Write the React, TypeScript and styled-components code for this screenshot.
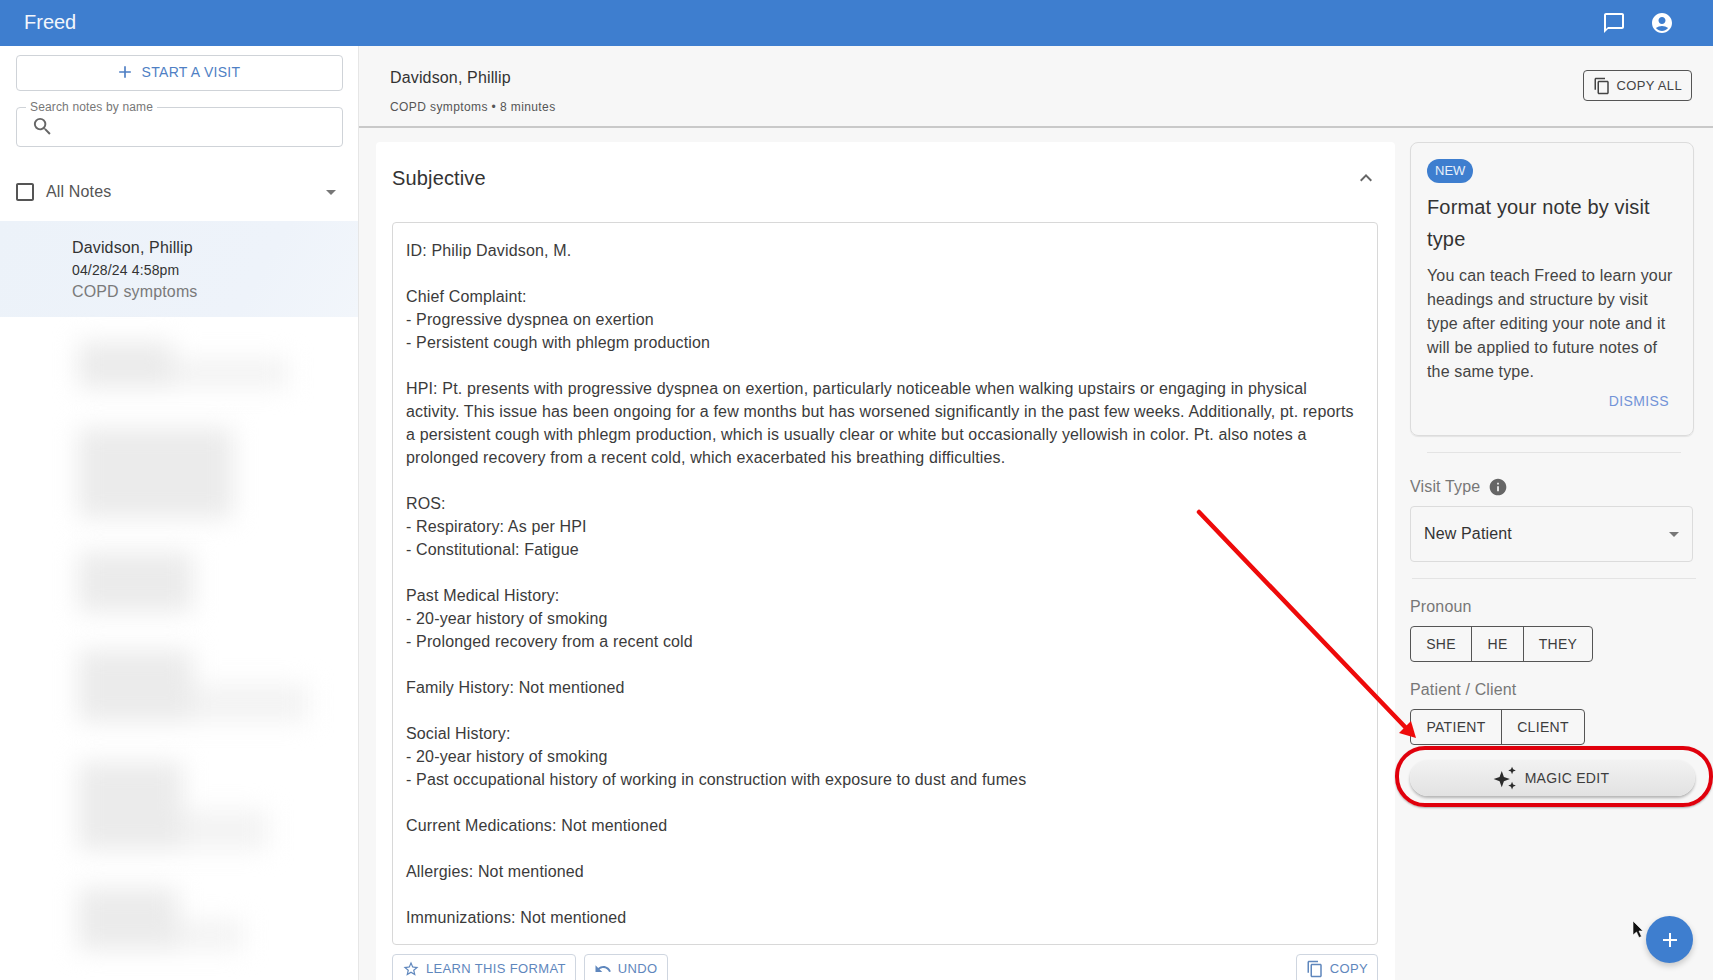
import styled, { createGlobalStyle } from 'styled-components'
import {
  MdAccountCircle,
  MdAdd,
  MdArrowDropDown,
  MdCheckBoxOutlineBlank,
  MdChatBubbleOutline,
  MdContentCopy,
  MdExpandLess,
  MdInfo,
  MdSearch,
  MdStarBorder,
  MdUndo
} from 'react-icons/md'

const GlobalStyle = createGlobalStyle`
  html, body {
    margin: 0;
    padding: 0;
    height: 100%;
    overflow: hidden;
    background: #f7f7f7;
    font-family: "Liberation Sans", Arial, sans-serif;
    letter-spacing: 0.15px;
  }
  * {
    box-sizing: border-box;
  }
`

const Page = styled.div`
  position: relative;
  width: 1713px;
  height: 980px;
  overflow: hidden;
  display: flex;
  flex-direction: column;
`

const AppBar = styled.header`
  height: 46px;
  flex-shrink: 0;
  background: #3e7ecf;
  color: #fff;
  display: flex;
  align-items: center;
  justify-content: space-between;
  padding: 0 39px 0 24px;
`

const Brand = styled.div`
  font-size: 20px;
  letter-spacing: 0;
  color: #f2f6fc;
  padding-bottom: 2px;
`

const AppBarIcons = styled.div`
  display: flex;
  align-items: center;
  gap: 24px;
`

const Body = styled.div`
  flex: 1;
  min-height: 0;
  display: flex;
`

const Sidebar = styled.aside`
  width: 359px;
  flex-shrink: 0;
  background: #fff;
  border-right: 1px solid #e6e6e6;
  padding-top: 9px;
  overflow: hidden;
`

const StartButton = styled.button`
  display: flex;
  align-items: center;
  justify-content: center;
  gap: 7px;
  width: 327px;
  height: 36px;
  margin: 0 0 0 16px;
  padding: 0 4px 2px 0;
  background: #fff;
  border: 1px solid #cfd3d8;
  border-radius: 4px;
  color: #4f7fc4;
  font: 14px "Liberation Sans", Arial, sans-serif;
  letter-spacing: 0.3px;
`

const SearchField = styled.div`
  position: relative;
  width: 327px;
  height: 40px;
  margin: 16px 0 0 16px;
  border: 1px solid #cfd3d8;
  border-radius: 4px;
  display: flex;
  align-items: center;
  padding: 0 0 2px 14px;
  color: #666;
`

const FloatingLabel = styled.span`
  position: absolute;
  top: -8px;
  left: 9px;
  padding: 0 4px;
  background: #fff;
  color: #777;
  font-size: 12px;
  line-height: 14px;
`

const FilterRow = styled.div`
  display: flex;
  align-items: center;
  height: 40px;
  margin-top: 25px;
  padding: 0 15px 0 13px;
  color: #555;
  font-size: 16px;
`

const FilterLabel = styled.span`
  flex: 1;
  margin-left: 9px;
`

const SelectedNote = styled.div`
  height: 96px;
  margin-top: 9px;
  padding: 16px 0 0 72px;
  background: linear-gradient(120deg, #ecf2f9 0%, #eef3fa 70%, #f2f6fb 100%);
`

const NoteName = styled.div`
  font-size: 16px;
  line-height: 22px;
  color: #333;
`

const NoteDate = styled.div`
  font-size: 14px;
  line-height: 22px;
  color: #333;
`

const NoteTopic = styled.div`
  font-size: 16px;
  line-height: 22px;
  color: #7a7a7a;
`

const BlurList = styled.div`
  padding-left: 78px;
`

const BlurRow = styled.div<{ $top: number }>`
  display: flex;
  align-items: flex-end;
  margin-top: ${p => p.$top}px;
  filter: blur(12px);
`

const BlurHead = styled.div<{ $w: number; $h: number }>`
  width: ${p => p.$w}px;
  height: ${p => p.$h}px;
  background: #ebebeb;
`

const BlurTail = styled.div<{ $w: number; $h: number }>`
  width: ${p => p.$w}px;
  height: ${p => p.$h}px;
  background: #f3f3f3;
`

const Main = styled.main`
  flex: 1;
  min-width: 0;
  display: flex;
  flex-direction: column;
  background: #f7f7f7;
`

const TopBar = styled.div`
  height: 82px;
  flex-shrink: 0;
  display: flex;
  align-items: flex-start;
  justify-content: space-between;
  padding: 22px 21px 0 31px;
  border-bottom: 2px solid #c9c9c9;
`

const VisitName = styled.div`
  font-size: 16px;
  line-height: 19px;
  color: #333;
`

const VisitMeta = styled.div`
  margin-top: 12px;
  font-size: 12px;
  line-height: 16px;
  letter-spacing: 0.4px;
  color: #555;
`

const OutlineButton = styled.button<{ $tone?: 'dark' | 'blue'; $top?: number }>`
  display: inline-flex;
  align-items: center;
  gap: 6px;
  height: 31px;
  margin-top: ${p => p.$top ?? 0}px;
  padding: 0 9px ${p => (p.$tone === 'blue' ? 2 : 0)}px;
  background: ${p => (p.$tone === 'blue' ? '#fff' : 'transparent')};
  border: 1px solid ${p => (p.$tone === 'blue' ? '#cfd6e0' : '#555')};
  border-radius: 4px;
  color: ${p => (p.$tone === 'blue' ? '#5f87bd' : '#444')};
  font: 13px "Liberation Sans", Arial, sans-serif;
  letter-spacing: 0.35px;
  white-space: nowrap;
`

const Content = styled.div`
  flex: 1;
  min-height: 0;
  display: flex;
  align-items: flex-start;
  gap: 15px;
  padding: 14px 0 0 17px;
  overflow: hidden;
`

const NoteCard = styled.section`
  width: 1019px;
  height: 900px;
  flex-shrink: 0;
  background: #fff;
  border-radius: 4px;
  padding: 0 17px 0 16px;
`

const CardHeader = styled.div`
  height: 80px;
  display: flex;
  align-items: center;
  justify-content: space-between;
  padding-bottom: 8px;
  color: #666;
`

const CardTitle = styled.h2`
  margin: 0;
  font-size: 20px;
  font-weight: 400;
  color: #333;
`

const NoteBox = styled.div`
  height: 723px;
  padding: 16px 13px 0;
  border: 1px solid #d8d8d8;
  border-radius: 4px;
  font-size: 16px;
  line-height: 23px;
  color: #3b3b3b;
  white-space: pre-wrap;
  overflow: hidden;
`

const NoteActions = styled.div`
  display: flex;
  align-items: center;
  gap: 8px;
  margin-top: 9px;
`

const Spacer = styled.div`
  flex: 1;
`

const SidePanel = styled.aside`
  width: 285px;
  flex-shrink: 0;
`

const TipCard = styled.div`
  width: 284px;
  height: 294px;
  padding: 16px 16px 0;
  border: 1px solid #dcdcdc;
  border-radius: 8px;
  box-shadow: 0 1px 1px rgba(0, 0, 0, 0.08);
`

const NewPill = styled.span`
  display: inline-block;
  height: 24px;
  padding: 0 8px;
  background: #3e7ecf;
  border-radius: 12px;
  color: #e8f0fa;
  font-size: 13px;
  letter-spacing: 0;
  line-height: 24px;
`

const TipTitle = styled.div`
  margin-top: 8px;
  font-size: 20px;
  line-height: 32px;
  color: #333;
`

const TipText = styled.div`
  margin-top: 9px;
  font-size: 16px;
  line-height: 24px;
  color: #444;
`

const Dismiss = styled.div`
  margin-top: 7px;
  padding-right: 8px;
  text-align: right;
  font-size: 14px;
  line-height: 20px;
  letter-spacing: 0.4px;
  color: #7394d8;
`

const Divider = styled.hr<{ $left: number; $right: number; $top: number }>`
  margin: ${p => p.$top}px ${p => p.$right}px 0 ${p => p.$left}px;
  border: 0;
  border-top: 1px solid #e4e4e4;
`

const FieldLabel = styled.div<{ $top: number }>`
  display: flex;
  align-items: center;
  gap: 8px;
  margin-top: ${p => p.$top}px;
  font-size: 16px;
  line-height: 20px;
  color: #777;
`

const SelectBox = styled.div`
  display: flex;
  align-items: center;
  justify-content: space-between;
  width: 283px;
  height: 56px;
  margin-top: 9px;
  padding: 0 6px 0 13px;
  border: 1px solid #dcdcdc;
  border-radius: 4px;
  font-size: 16px;
  color: #333;
`

const ToggleGroup = styled.div<{ $top: number }>`
  display: inline-flex;
  height: 36px;
  margin-top: ${p => p.$top}px;
  border: 1px solid #555;
  border-radius: 4px;
`

const ToggleItem = styled.div<{ $w: number }>`
  display: flex;
  align-items: center;
  justify-content: center;
  width: ${p => p.$w}px;
  font-size: 14px;
  letter-spacing: 0.3px;
  color: #3d3d3d;
  & + & {
    border-left: 1px solid #555;
  }
`

const MagicWrap = styled.div`
  position: relative;
  width: 285px;
  height: 36px;
  margin-top: 15px;
`

const MagicButton = styled.button`
  display: flex;
  align-items: center;
  justify-content: center;
  gap: 7px;
  width: 100%;
  height: 100%;
  padding: 0 4px 0 0;
  background: linear-gradient(180deg, #f2f2f2 0%, #e2e2e2 100%);
  border: 0;
  border-radius: 18px;
  box-shadow: 0 2px 3px rgba(0, 0, 0, 0.28);
  color: #3d3d3d;
  font: 14px "Liberation Sans", Arial, sans-serif;
  letter-spacing: 0.3px;
`

const MagicRing = styled.div`
  position: absolute;
  top: -14px;
  left: -15px;
  right: -18px;
  bottom: -11px;
  border: 4px solid #e0000c;
  border-radius: 30px;
  box-shadow: 0 1px 2px rgba(0, 0, 0, 0.3);
`

const ArrowOverlay = styled.svg`
  position: absolute;
  left: 1190px;
  top: 500px;
`

const CursorOverlay = styled.svg`
  position: absolute;
  left: 1632px;
  top: 920px;
`

const Fab = styled.button`
  position: absolute;
  left: 1646px;
  top: 916px;
  width: 47px;
  height: 47px;
  display: flex;
  align-items: center;
  justify-content: center;
  padding: 0;
  background: #3e7ecf;
  border: 0;
  border-radius: 50%;
  color: #fff;
  box-shadow: 0 3px 6px rgba(0, 0, 0, 0.2);
`

const noteText = `ID: Philip Davidson, M.

Chief Complaint:
- Progressive dyspnea on exertion
- Persistent cough with phlegm production

HPI: Pt. presents with progressive dyspnea on exertion, particularly noticeable when walking upstairs or engaging in physical activity. This issue has been ongoing for a few months but has worsened significantly in the past few weeks. Additionally, pt. reports a persistent cough with phlegm production, which is usually clear or white but occasionally yellowish in color. Pt. also notes a prolonged recovery from a recent cold, which exacerbated his breathing difficulties.

ROS:
- Respiratory: As per HPI
- Constitutional: Fatigue

Past Medical History:
- 20-year history of smoking
- Prolonged recovery from a recent cold

Family History: Not mentioned

Social History:
- 20-year history of smoking
- Past occupational history of working in construction with exposure to dust and fumes

Current Medications: Not mentioned

Allergies: Not mentioned

Immunizations: Not mentioned`

const blurredNotes = [
  { top: 25, head: [95, 46], tail: [115, 30] },
  { top: 40, head: [155, 90], tail: [0, 0] },
  { top: 34, head: [115, 60], tail: [0, 0] },
  { top: 38, head: [115, 72], tail: [115, 38] },
  { top: 40, head: [105, 88], tail: [85, 40] },
  { top: 38, head: [100, 62], tail: [65, 30] }
]

function SparkleIcon() {
  return (
    <svg width="26" height="26" viewBox="0 0 24 24" fill="#2b2b2b">
      <path d="M9 5.500 11 11l5.500 2-5.500 2L9 20.500 7 15l-5.500-2L7 11z" />
      <path d="M18.500 1.500 19.500 4l2.500 1-2.500 1-1 2.500-1-2.500-2.500-1 2.500-1z" />
      <path d="M18.500 15.500 19.500 18l2.500 1-2.500 1-1 2.500-1-2.500-2.500-1 2.500-1z" />
    </svg>
  )
}

export default function App() {
  return (
    <Page>
      <GlobalStyle />
      <AppBar>
        <Brand>Freed</Brand>
        <AppBarIcons>
          <MdChatBubbleOutline size={24} />
          <MdAccountCircle size={24} />
        </AppBarIcons>
      </AppBar>

      <Body>
        <Sidebar>
          <StartButton>
            <MdAdd size={20} />
            START A VISIT
          </StartButton>
          <SearchField>
            <FloatingLabel>Search notes by name</FloatingLabel>
            <MdSearch size={23} />
          </SearchField>
          <FilterRow>
            <MdCheckBoxOutlineBlank size={24} />
            <FilterLabel>All Notes</FilterLabel>
            <MdArrowDropDown size={24} color="#777" />
          </FilterRow>
          <SelectedNote>
            <NoteName>Davidson, Phillip</NoteName>
            <NoteDate>04/28/24 4:58pm</NoteDate>
            <NoteTopic>COPD symptoms</NoteTopic>
          </SelectedNote>
          <BlurList>
            {blurredNotes.map((note, i) => (
              <BlurRow key={i} $top={note.top}>
                <BlurHead $w={note.head[0]} $h={note.head[1]} />
                <BlurTail $w={note.tail[0]} $h={note.tail[1]} />
              </BlurRow>
            ))}
          </BlurList>
        </Sidebar>

        <Main>
          <TopBar>
            <div>
              <VisitName>Davidson, Phillip</VisitName>
              <VisitMeta>COPD symptoms • 8 minutes</VisitMeta>
            </div>
            <OutlineButton $top={2}>
              <MdContentCopy size={18} />
              COPY ALL
            </OutlineButton>
          </TopBar>

          <Content>
            <NoteCard>
              <CardHeader>
                <CardTitle>Subjective</CardTitle>
                <MdExpandLess size={24} />
              </CardHeader>
              <NoteBox>{noteText}</NoteBox>
              <NoteActions>
                <OutlineButton $tone="blue">
                  <MdStarBorder size={18} />
                  LEARN THIS FORMAT
                </OutlineButton>
                <OutlineButton $tone="blue">
                  <MdUndo size={18} />
                  UNDO
                </OutlineButton>
                <Spacer />
                <OutlineButton $tone="blue">
                  <MdContentCopy size={18} />
                  COPY
                </OutlineButton>
              </NoteActions>
            </NoteCard>

            <SidePanel>
              <TipCard>
                <NewPill>NEW</NewPill>
                <TipTitle>Format your note by visit type</TipTitle>
                <TipText>
                  You can teach Freed to learn your headings and structure by visit type after editing your note and it will be applied to future notes of the same type.
                </TipText>
                <Dismiss>DISMISS</Dismiss>
              </TipCard>
              <Divider $left={17} $right={14} $top={16} />
              <FieldLabel $top={24}>
                Visit Type
                <MdInfo size={20} color="#666" />
              </FieldLabel>
              <SelectBox>
                New Patient
                <MdArrowDropDown size={24} color="#777" />
              </SelectBox>
              <Divider $left={2} $right={-1} $top={16} />
              <FieldLabel $top={18}>Pronoun</FieldLabel>
              <ToggleGroup $top={9}>
                <ToggleItem $w={60}>SHE</ToggleItem>
                <ToggleItem $w={52}>HE</ToggleItem>
                <ToggleItem $w={69}>THEY</ToggleItem>
              </ToggleGroup>
              <FieldLabel $top={18}>Patient / Client</FieldLabel>
              <ToggleGroup $top={9}>
                <ToggleItem $w={90}>PATIENT</ToggleItem>
                <ToggleItem $w={83}>CLIENT</ToggleItem>
              </ToggleGroup>
              <MagicWrap>
                <MagicButton>
                  <SparkleIcon />
                  MAGIC EDIT
                </MagicButton>
                <MagicRing />
              </MagicWrap>
            </SidePanel>
          </Content>
        </Main>
      </Body>

      <ArrowOverlay width="240" height="250" viewBox="0 0 240 250">
        <path d="M9 12 218 230" stroke="#ee0a0a" strokeWidth="4.500" strokeLinecap="round" fill="none" />
        <path d="M226 238 209 233 221 221z" fill="#ee0a0a" />
      </ArrowOverlay>
      <CursorOverlay width="14" height="20" viewBox="0 0 14 20">
        <path d="M1 1v14l3.500-3 2.500 5.500 2.500-1-2.500-5.500H11z" fill="#111" stroke="#fff" strokeWidth="0.600" />
      </CursorOverlay>
      <Fab>
        <MdAdd size={24} />
      </Fab>
    </Page>
  )
}
